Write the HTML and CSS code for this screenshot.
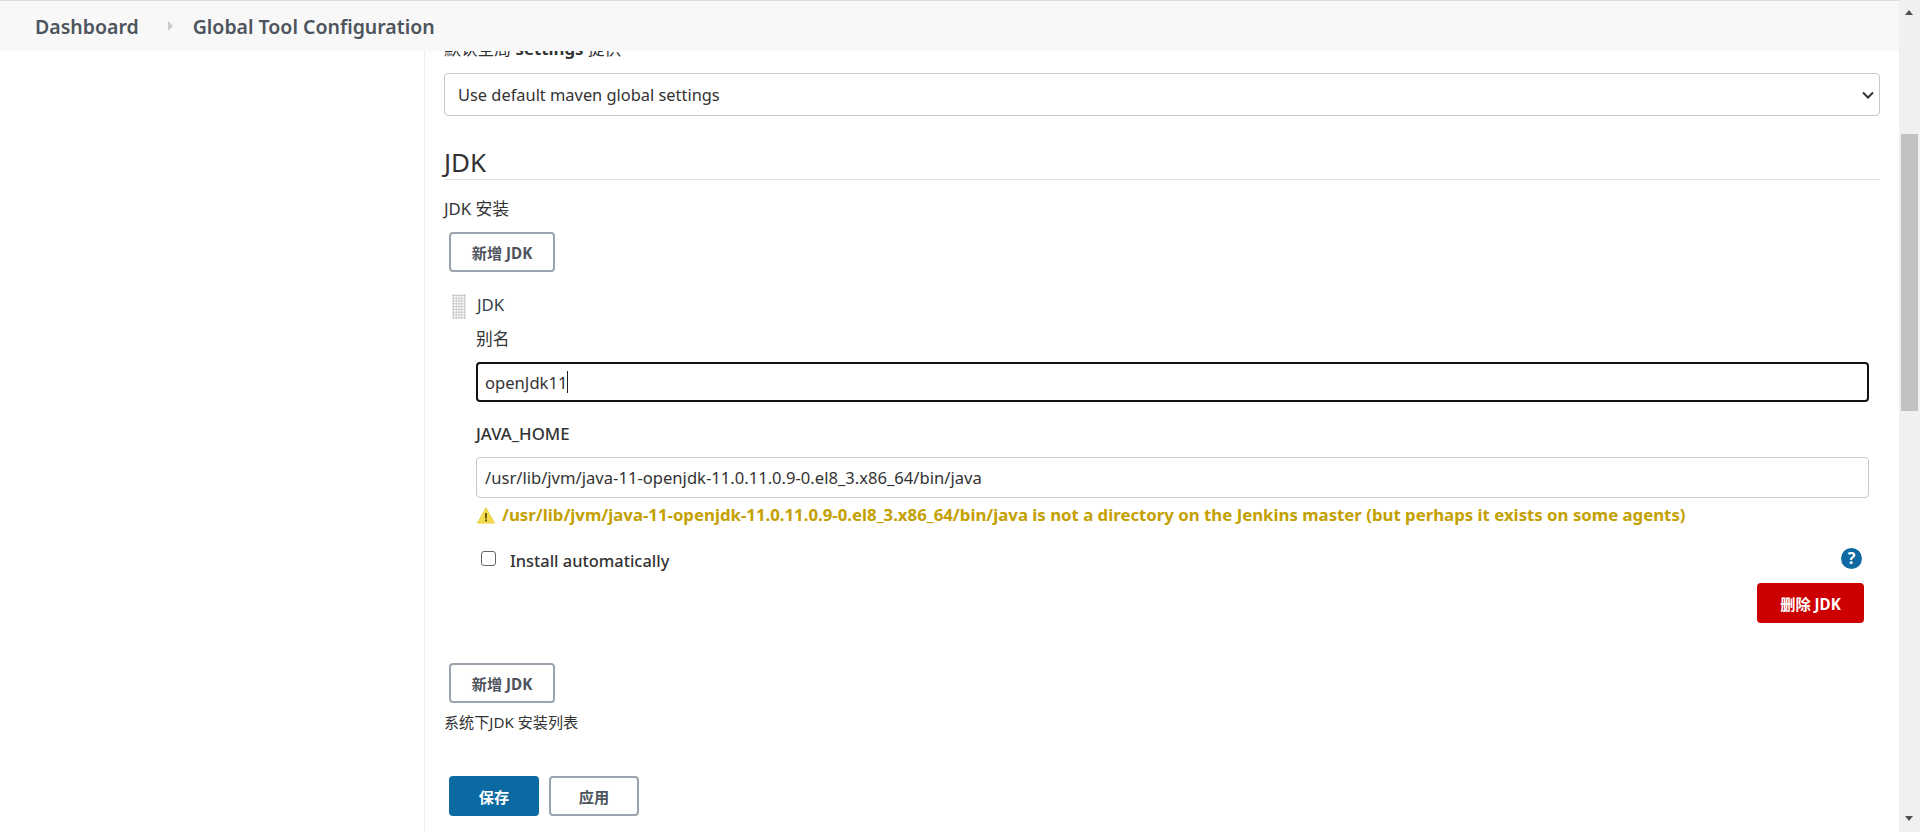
FILE: index.html
```html
<!DOCTYPE html>
<html lang="en">

	<head>
		<meta charset="UTF-8" />
		<meta name="viewport" content="width=device-width, initial-scale=1.0" />
		<title>Global Tool Configuration</title>
		<link rel="stylesheet" href="styles.css">
	</head>

	<body>
		<div class="page">
			<div class="breadcrumb">
				<a class="crumb">Dashboard</a>
				<span class="crumb-arrow"></span>
				<a class="crumb">Global Tool Configuration</a>
			</div>

			<div class="layout">
				<div class="side"></div>
				<div class="main">
					<div class="setting-name clipped">默认全局 <b>settings</b> 提供</div>
					<div class="select-box">
						<span>Use default maven global settings</span>
						<svg class="chevron" width="12" height="8" viewBox="0 0 12 8"><path d="M1 1.5l5 5 5-5" fill="none" stroke="#333" stroke-width="2"/></svg>
					</div>

					<h2 class="section-title">JDK</h2>
					<div class="setting-name install-name">JDK 安装</div>
					<button class="btn add-first">新增 JDK</button>

					<div class="item">
						<div class="handle"></div>
						<div class="item-body">
							<div class="item-title">JDK</div>
							<div class="field-label alias-label">别名</div>
							<div class="text-input focused">openJdk11<span class="caret"></span></div>
							<div class="field-label home-label">JAVA_HOME</div>
							<div class="text-input home-input">/usr/lib/jvm/java-11-openjdk-11.0.11.0.9-0.el8_3.x86_64/bin/java</div>
							<div class="warning">
								<svg width="18" height="17" viewBox="0 0 18 17"><path d="M9 .8L17.500 16H.5z" fill="#f5dc4e" stroke="#e9cf3f" stroke-linejoin="round"/><rect x="8.100" y="6" width="1.800" height="5.500" fill="#5a4b00"/><rect x="8.100" y="12.500" width="1.800" height="1.800" fill="#5a4b00"/></svg>
								<span>/usr/lib/jvm/java-11-openjdk-11.0.11.0.9-0.el8_3.x86_64/bin/java is not a directory on the Jenkins master (but perhaps it exists on some agents)</span>
							</div>
							<div class="check-row">
								<span class="checkbox"></span>
								<span class="check-label">Install automatically</span>
								<span class="help">?</span>
							</div>
							<div class="delete-row">
								<button class="btn btn-danger">删除 JDK</button>
							</div>
						</div>
					</div>

					<button class="btn add-second">新增 JDK</button>
					<div class="description">系统下JDK 安装列表</div>

					<div class="form-buttons">
						<button class="btn btn-primary">保存</button>
						<button class="btn">应用</button>
					</div>
				</div>
			</div>

			<div class="scrollbar">
				<span class="arrow-up"></span>
				<div class="thumb"></div>
				<span class="arrow-down"></span>
			</div>
		</div>
	</body>

</html>
```

FILE: styles.css
```css
* {
	box-sizing: border-box;
}

html,
body {
	margin: 0;
	height: 100%;
	overflow: hidden;
}

body {
	font-family: "Noto Sans", "Noto Sans CJK SC", sans-serif;
	font-size: 16.800px;
	color: #333;
	background: #fff;
}

.page {
	position: relative;
	height: 832px;
	overflow: hidden;
	padding-right: 21px;
}

.breadcrumb {
	position: absolute;
	left: 0;
	top: 0;
	right: 21px;
	z-index: 10;
	height: 51px;
	display: flex;
	align-items: center;
	padding-left: 35px;
	background: #f8f8f8;
	border-top: 1px solid #dcdde3;
}

.crumb {
	font-size: 19.500px;
	font-weight: 600;
	color: #4d545d;
}

.crumb-arrow {
	width: 0;
	height: 0;
	margin: 0 20px 0 29px;
	border-left: 5px solid #ccc;
	border-top: 5px solid transparent;
	border-bottom: 5px solid transparent;
}

.layout {
	display: flex;
	height: 832px;
}

.side {
	width: 425px;
	flex: none;
	border-right: 1px solid #ececec;
}

.main {
	flex: 1;
	padding: 0 19px;
	min-width: 0;
}

.setting-name {
	line-height: 20px;
}

.clipped {
	margin-top: 39px;
	height: 20px;
}

.select-box {
	height: 43px;
	margin-top: 14px;
	display: flex;
	align-items: center;
	justify-content: space-between;
	padding: 0 5px 0 13px;
	border: 1px solid #c8c8c8;
	border-radius: 4px;
	font-size: 16.400px;
}

.section-title {
	margin: 30px 0 0;
	height: 34px;
	font-size: 26px;
	font-weight: 400;
	line-height: 32px;
	border-bottom: 1px solid #e4e4e4;
	color: #333;
}

.install-name {
	margin-top: 19px;
}

.btn {
	display: block;
	height: 40px;
	padding: 0;
	border: 2px solid #9aa5af;
	border-radius: 4px;
	background: #fff;
	color: #4d545d;
	font: 700 15.200px "Noto Sans", "Noto Sans CJK SC", sans-serif;
}

.add-first {
	width: 106px;
	margin: 13px 0 0 5px;
}

.item {
	display: flex;
	margin-top: 22px;
	padding-left: 8px;
}

.handle {
	width: 14px;
	height: 25px;
	flex: none;
	background: radial-gradient(circle, #c8c8c8 1px, transparent 1px) 0 0 / 2.800px 2.800px;
}

.item-body {
	flex: 1;
	min-width: 0;
	padding: 0 11px 0 10px;
}

.item-title {
	padding-left: 1px;
	line-height: 22px;
	color: #38424b;
}

.field-label {
	line-height: 22px;
}

.alias-label {
	margin-top: 12px;
}

.home-label {
	margin-top: 21px;
	font-weight: 500;
}

.text-input {
	height: 40px;
	margin-top: 12px;
	display: flex;
	align-items: center;
	padding-left: 8px;
	border: 1px solid #c8c8c8;
	border-radius: 4px;
	font-size: 16.600px;
}

.text-input.focused {
	border: 2px solid #111;
	padding-left: 7px;
}

.home-input {
	height: 41px;
}

.caret {
	width: 1px;
	height: 22px;
	background: #222;
}

.warning {
	display: flex;
	align-items: center;
	gap: 7px;
	margin-top: 7px;
	padding-left: 1px;
	color: #c4a000;
	font-weight: 700;
	line-height: 20px;
	white-space: nowrap;
}

.check-row {
	display: flex;
	align-items: center;
	margin-top: 21px;
	padding-left: 5px;
	height: 24px;
}

.checkbox {
	width: 15px;
	height: 15px;
	border: 1px solid #666;
	border-radius: 3px;
}

.check-label {
	margin-left: 14px;
	padding-top: 5px;
	font-size: 16.400px;
	font-weight: 500;
}

.help {
	margin-left: auto;
	margin-right: 7px;
	width: 21px;
	height: 21px;
	border-radius: 50%;
	background: #0f6aa3;
	color: #fff;
	font-weight: 700;
	font-size: 16px;
	line-height: 21px;
	text-align: center;
}

.delete-row {
	display: flex;
	justify-content: flex-end;
	margin-top: 13px;
	padding-right: 5px;
}

.btn-danger {
	width: 107px;
	background: #cc0000;
	border-color: #cc0000;
	color: #fff;
}

.add-second {
	width: 106px;
	margin: 40px 0 0 5px;
}

.description {
	margin-top: 9px;
	font-size: 15.100px;
	line-height: 20px;
}

.form-buttons {
	display: flex;
	gap: 10px;
	margin: 44px 0 0 5px;
}

.form-buttons .btn {
	width: 90px;
}

.form-buttons .btn-primary {
	background: #0b6aa2;
	border-color: #0b6aa2;
	color: #fff;
}

.scrollbar {
	position: absolute;
	right: 0;
	top: 0;
	width: 21px;
	height: 832px;
	background: #f0f0f0;
}

.thumb {
	position: absolute;
	top: 134px;
	left: 2px;
	width: 17px;
	height: 277px;
	background: #c2c2c2;
}

.arrow-up,
.arrow-down {
	position: absolute;
	left: 6px;
	width: 0;
	height: 0;
	border-left: 4.500px solid transparent;
	border-right: 4.500px solid transparent;
}

.arrow-up {
	top: 10px;
	border-bottom: 5px solid #505050;
}

.arrow-down {
	bottom: 11px;
	border-top: 5px solid #505050;
}
```
